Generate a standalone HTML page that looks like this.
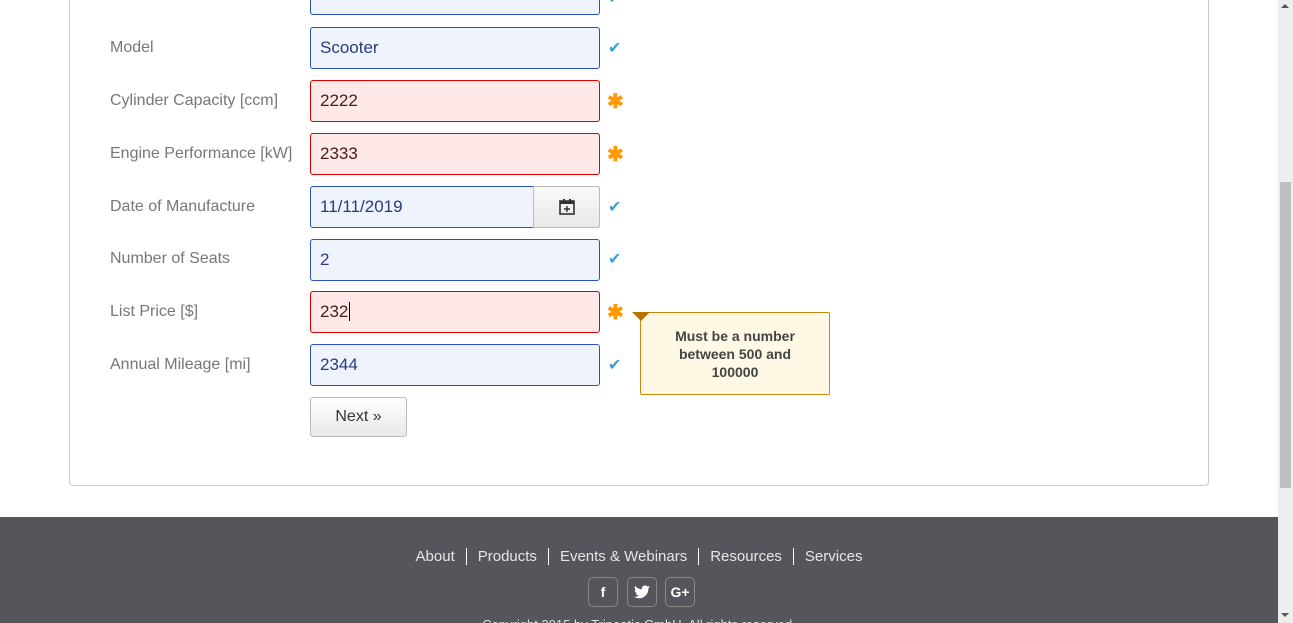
<!DOCTYPE html>
<html><head><style>
body{margin:0;width:1293px;height:623px;overflow:hidden;background:#fff;font-family:"Liberation Sans",sans-serif;position:relative}
.card{position:absolute;left:69px;top:-20px;width:1138px;height:504px;border:1px solid #ccc;border-radius:4px}
.lbl{position:absolute;left:110px;color:#777;font-size:16px;line-height:20px}
.f{position:absolute;left:310px;width:290px;height:42px;border:1px solid #2a52be;border-radius:3px;background:#eef3fc;color:#2a3a80;font-size:17px;line-height:40px;padding-left:9px;box-sizing:border-box}
.f.e{border-color:#d00;background:#ffe8e8;color:#4a1a1a}
.ck{position:absolute;left:608px;color:#3aa0d8;font-size:16px}
.st{position:absolute;left:607px;color:#f90;font-size:20px;font-weight:bold}
.footer{position:absolute;left:0;top:517px;width:1278px;height:106px;background:#55565b;overflow:hidden}
.links{position:absolute;top:31px;left:0;width:1278px;text-align:center;color:#e6e6e6;font-size:15px}
.links span{padding:0 11px;border-left:1px solid #fff}
.links span:first-child{border:none}
.soc{position:absolute;top:60px;width:28px;height:28px;border:1px solid #888;border-radius:5px;color:#fff;font-weight:bold;text-align:center;line-height:28px;font-size:14px}
</style></head><body>
<div class="card"></div>
<div class="lbl" style="top:-14px">Make</div>
<div class="f" style="top:-27px">BMW</div><div class="ck" style="top:-12px">✔</div>
<div class="lbl" style="top:38px">Model</div>
<div class="f" style="top:27px">Scooter</div><div class="ck" style="top:38px">✔</div>
<div class="lbl" style="top:91px">Cylinder Capacity [ccm]</div>
<div class="f e" style="top:80px">2222</div><div class="st" style="top:89px">✱</div>
<div class="lbl" style="top:144px">Engine Performance [kW]</div>
<div class="f e" style="top:133px">2333</div><div class="st" style="top:142px">✱</div>
<div class="lbl" style="top:197px">Date of Manufacture</div>
<div class="f" style="top:186px">11/11/2019</div>
<div style="position:absolute;left:533px;top:186px;width:67px;height:42px;box-sizing:border-box;border:1px solid #bbb;border-radius:0 3px 3px 0;background:linear-gradient(#fafafa,#e8e8e8)">
<svg width="18" height="18" viewBox="0 0 18 18" style="position:absolute;left:24px;top:11px"><rect x="2" y="3" width="14" height="13" fill="none" stroke="#333" stroke-width="1.6"/><rect x="2" y="3" width="14" height="3" fill="#333"/><line x1="6" y1="1" x2="6" y2="4" stroke="#333" stroke-width="2"/><line x1="12" y1="1" x2="12" y2="4" stroke="#333" stroke-width="2"/><path d="M9 8v6M6 11h6" stroke="#333" stroke-width="1.4"/></svg></div>
<div class="ck" style="top:197px">✔</div>
<div class="lbl" style="top:249px">Number of Seats</div>
<div class="f" style="top:239px">2</div><div class="ck" style="top:249px">✔</div>
<div class="lbl" style="top:302px">List Price [$]</div>
<div class="f e" style="top:291px">232<span style="border-left:1px solid #000;margin-left:1px"></span></div><div class="st" style="top:300px">✱</div>
<div class="lbl" style="top:355px">Annual Mileage [mi]</div>
<div class="f" style="top:344px">2344</div><div class="ck" style="top:355px">✔</div>
<div style="position:absolute;left:310px;top:397px;width:97px;height:40px;box-sizing:border-box;border:1px solid #bbb;border-radius:3px;background:linear-gradient(#fff,#e8e8e8);text-align:center;line-height:38px;font-size:16px;color:#333">Next »</div>
<div style="position:absolute;left:640px;top:312px;width:188px;height:81px;border:1px solid #c8860a;border-radius:2px;background:#fff8e5;color:#444;font-size:14px;font-weight:bold;text-align:center;line-height:18px"><div style="padding:14px 20px 0">Must be a number between 500 and 100000</div></div>
<div style="position:absolute;left:632px;top:312px;width:0;height:0;border-left:9px solid transparent;border-right:9px solid transparent;border-top:9px solid #b87300"></div>
<div class="footer">
<div class="links"><span>About</span><span>Products</span><span>Events &amp; Webinars</span><span>Resources</span><span>Services</span></div>
<div class="soc" style="left:588px">f</div>
<div class="soc" style="left:627px"><svg width="16" height="14" viewBox="0 0 24 20" style="margin-top:7px"><path d="M24 2.4a10 10 0 0 1-2.8.8A5 5 0 0 0 23.3.5a10 10 0 0 1-3.1 1.2A4.9 4.9 0 0 0 11.8 6 14 14 0 0 1 1.7.9a4.9 4.9 0 0 0 1.5 6.6A4.9 4.9 0 0 1 1 6.9a4.9 4.9 0 0 0 3.9 4.8 5 5 0 0 1-2.2.1 4.9 4.9 0 0 0 4.6 3.4A9.9 9.9 0 0 1 0 17.3 14 14 0 0 0 7.5 19.5c9 0 14-7.5 14-14v-.6A10 10 0 0 0 24 2.4z" fill="#fff"/></svg></div>
<div class="soc" style="left:665px">G+</div>
<div style="position:absolute;top:100px;width:1278px;text-align:center;color:#ddd;font-size:13px">Copyright 2015 by Tripeatic GmbH. All rights reserved.</div>
</div>
<div style="position:absolute;left:1278px;top:0;width:15px;height:623px;background:#eee"></div>
<div style="position:absolute;left:1280px;top:182px;width:11px;height:306px;background:#bfbfbf"></div>
<div style="position:absolute;left:1281px;top:4px;border-left:4px solid transparent;border-right:4px solid transparent;border-bottom:4px solid #555"></div>
<div style="position:absolute;left:1281px;top:613px;border-left:4px solid transparent;border-right:4px solid transparent;border-top:4px solid #555"></div>
</body></html>
